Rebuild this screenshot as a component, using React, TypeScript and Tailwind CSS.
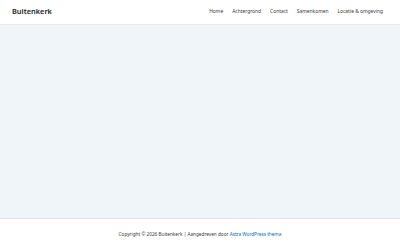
import React from 'react';

const navItems = ['Home', 'Achtergrond', 'Contact', 'Samenkomen', 'Locatie & omgeving'];

const App: React.FC = () => {
  return (
    <div className="flex h-[250px] w-[400px] flex-col bg-white font-['Noto_Sans',sans-serif] text-[#3a3a3a]">
      {/* Header */}
      <header className="flex h-[25px] items-center justify-between border-b border-[#e6e9ee] bg-white pl-[12px] pr-[17px] shadow-[0_1px_2px_rgba(0,0,0,0.04)]">
        <span className="text-[7.4px] font-semibold text-[#222222]">Buitenkerk</span>
        <nav className="flex items-center gap-[9px] text-[4.9px] text-[#3a3a3a]">
          {navItems.map(item => (
            <a key={item} href="#" className="whitespace-nowrap">
              {item}
            </a>
          ))}
        </nav>
      </header>

      {/* Content */}
      <main className="flex-1 bg-[#f0f5fa]" />

      {/* Footer */}
      <footer className="flex h-[32px] items-center justify-center border-t border-[#dde3ea] bg-white text-[4.7px] text-[#3a3a3a]">
        <p>
          Copyright © 2026 Buitenkerk | Aangedreven door{' '}
          <a href="#" className="text-[#0170b9]">Astra WordPress thema</a>
        </p>
      </footer>
    </div>
  );
};

export default App;
